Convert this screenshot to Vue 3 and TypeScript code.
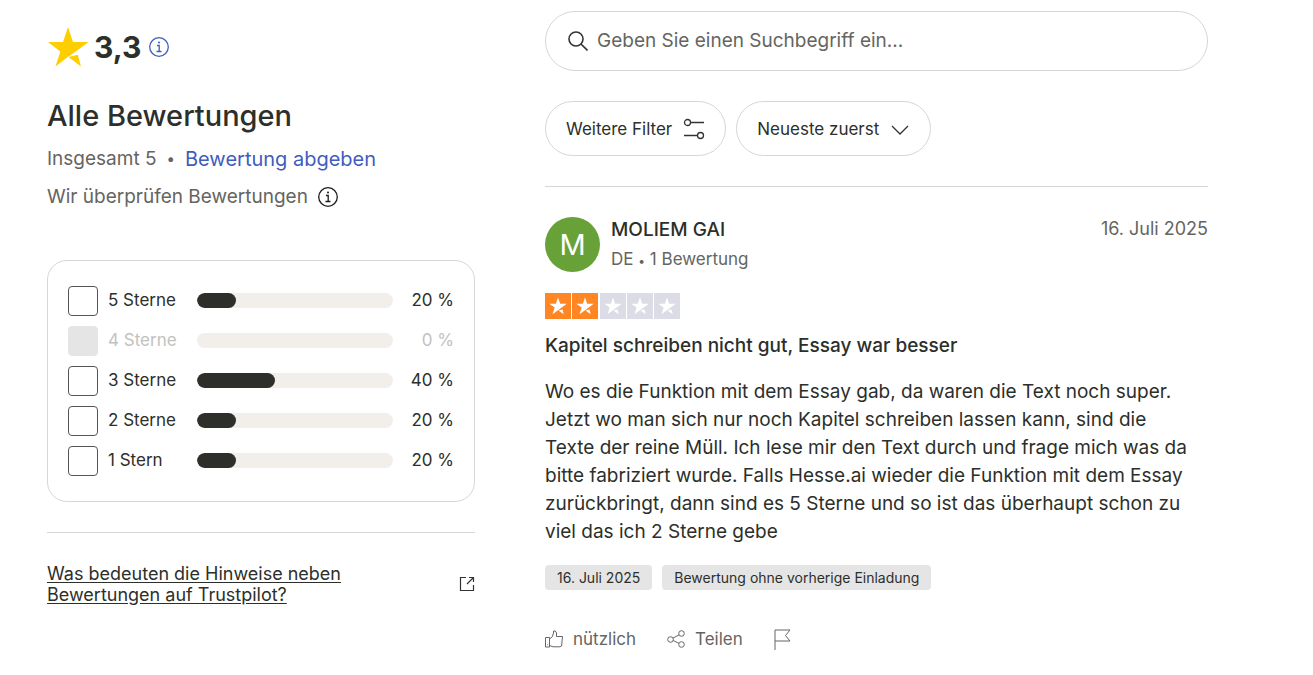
<script setup lang="ts">
import { ref } from 'vue'

interface RatingRow {
  stars: number
  label: string
  percent: number
}

const rows: RatingRow[] = [
  { stars: 5, label: '5 Sterne', percent: 20 },
  { stars: 4, label: '4 Sterne', percent: 0 },
  { stars: 3, label: '3 Sterne', percent: 40 },
  { stars: 2, label: '2 Sterne', percent: 20 },
  { stars: 1, label: '1 Stern', percent: 20 },
]

const selected = ref<number[]>([])
const query = ref('')
const sort = ref('recency')
const rating = 2
</script>

<template>
  <main class="page">
    <aside class="summary">
      <div class="score">
        <svg class="score-star" viewBox="0 0 42 40" aria-hidden="true">
          <path fill="#ffce00" d="M21 0l5 15h15.500L29.500 24 21 29.800 8.500 39.500l4.800-15L1 15h15z" />
          <path fill="#ffce00" d="M21.500 30l9.300-2.300L34 39.500z" />
        </svg>
        <strong class="score-value">3,3</strong>
        <button class="info info-blue" type="button" aria-label="Info zum TrustScore">
          <svg viewBox="0 0 20 20" aria-hidden="true">
            <circle cx="10" cy="10" r="9.300" />
            <path d="M8 8.500h2.200v6M7.500 14.500h5" />
            <circle class="dot" cx="10" cy="5.500" r="1" />
          </svg>
        </button>
      </div>

      <h2 class="heading">Alle Bewertungen</h2>
      <p class="line total">
        <span>Insgesamt 5</span><span class="bullet">•</span><a class="write" href="#">Bewertung abgeben</a>
      </p>
      <p class="line">
        <span>Wir überprüfen Bewertungen</span>
        <button class="info" type="button" aria-label="Mehr über die Überprüfung">
          <svg viewBox="0 0 20 20" aria-hidden="true">
            <circle cx="10" cy="10" r="9.300" />
            <path d="M8 8.500h2.200v6M7.500 14.500h5" />
            <circle class="dot" cx="10" cy="5.500" r="1" />
          </svg>
        </button>
      </p>

      <div class="distribution">
        <label v-for="row in rows" :key="row.stars" class="row" :class="{ disabled: row.percent === 0 }">
          <input v-model="selected" class="check" type="checkbox" :value="row.stars" :disabled="row.percent === 0" />
          <span class="row-label">{{ row.label }}</span>
          <span class="track"><span class="fill" :style="{ width: row.percent + '%' }"></span></span>
          <span class="percent">{{ row.percent }}&nbsp;%</span>
        </label>
      </div>

      <div class="help">
        <a class="help-link" href="#">Was bedeuten die Hinweise neben Bewertungen auf Trustpilot?</a>
        <svg class="external" viewBox="0 0 16 16" aria-hidden="true">
          <path d="M7 1.500H1.500v13h13V9M10 1.500h4.500V6M14.500 1.500L8 8" />
        </svg>
      </div>
    </aside>

    <section class="reviews">
      <label class="search">
        <svg class="search-icon" viewBox="0 0 20 20" aria-hidden="true">
          <circle cx="8" cy="8" r="7" />
          <path d="M13 13l6.500 6.500" />
        </svg>
        <input v-model="query" type="search" placeholder="Geben Sie einen Suchbegriff ein..." aria-label="Bewertungen durchsuchen" />
      </label>

      <div class="filters">
        <button class="pill" type="button">
          <span>Weitere Filter</span>
          <svg class="sliders" viewBox="0 0 22 22" aria-hidden="true">
            <circle cx="4.500" cy="4.500" r="3" />
            <path d="M7.500 4.500H21M1 17.500h13" />
            <circle cx="17.500" cy="17.500" r="3" />
          </svg>
        </button>
        <span class="pill-select">
          <select v-model="sort" class="pill" aria-label="Sortierung">
            <option value="recency">Neueste zuerst</option>
          </select>
          <svg class="chevron" viewBox="0 0 18 10" aria-hidden="true"><path d="M1 1l8 8 8-8" /></svg>
        </span>
      </div>

      <article class="review">
        <header class="consumer">
          <span class="avatar" aria-hidden="true">M</span>
          <div class="who">
            <a class="name" href="#">MOLIEM GAI</a>
            <span class="meta">DE <span class="sep">•</span> 1 Bewertung</span>
          </div>
          <time class="date" datetime="2025-07-16">16. Juli 2025</time>
        </header>

        <div class="stars" role="img" aria-label="Bewertet mit 2 von 5 Sternen">
          <span v-for="n in 5" :key="n" class="star" :class="{ on: n <= rating }">
            <svg viewBox="0 0 26 26" aria-hidden="true">
              <path d="M13 4.500l2.200 6.300h6.500l-5 3.700-3.700 2.700-5.500 4.100 2.200-6.800-5.400-3.700h6.500zM13.500 17.500l4-1 1.200 4.800z" />
            </svg>
          </span>
        </div>

        <h3 class="title">Kapitel schreiben nicht gut, Essay war besser</h3>
        <p class="text">
          Wo es die Funktion mit dem Essay gab, da waren die Text noch super.<br />
          Jetzt wo man sich nur noch Kapitel schreiben lassen kann, sind die<br />
          Texte der reine Müll. Ich lese mir den Text durch und frage mich was da<br />
          bitte fabriziert wurde. Falls Hesse.ai wieder die Funktion mit dem Essay<br />
          zurückbringt, dann sind es 5 Sterne und so ist das überhaupt schon zu<br />
          viel das ich 2 Sterne gebe
        </p>

        <div class="badges">
          <span class="badge">16. Juli 2025</span>
          <span class="badge">Bewertung ohne vorherige Einladung</span>
        </div>

        <div class="actions">
          <button class="action" type="button">
            <svg viewBox="0 0 18 18" aria-hidden="true">
              <path d="M.5 7.500h4v9.500h-4zM4.500 9l2.800-2.300L8.500 3V1h1.800l1.200 2v3.500h6l-.9 9.500-1.600.8H8L4.500 15.500M2.300 14.700h.8" />
            </svg>
            <span>nützlich</span>
          </button>
          <button class="action" type="button">
            <svg viewBox="0 0 18 18" aria-hidden="true">
              <circle cx="3.500" cy="9.500" r="2.800" />
              <circle cx="14.500" cy="3.500" r="2.800" />
              <circle cx="14.500" cy="14.500" r="2.800" />
              <path d="M6 8.100l6-3.200M6.200 10.500l5.700 2.800" />
            </svg>
            <span>Teilen</span>
          </button>
          <button class="action flag" type="button" aria-label="Bewertung melden">
            <svg viewBox="0 0 17 21" aria-hidden="true">
              <path d="M1 21V1h15l-4.500 5.500L16 12H1" />
            </svg>
          </button>
        </div>
      </article>
    </section>
  </main>
</template>

<style>
body {
  margin: 0;
  background: #fff;
}
</style>

<style scoped>
.page {
  box-sizing: border-box;
  display: grid;
  grid-template-columns: 428fr 663fr;
  column-gap: 70px;
  padding: 11px 105px 24px 47px;
  color: #2c2f2a;
  font-family: Inter, "Liberation Sans", sans-serif;
  font-size: 17px;
  line-height: 24px;
}

.page * {
  box-sizing: border-box;
}

button,
input,
select {
  margin: 0;
  color: inherit;
  font: inherit;
}

button {
  padding: 0;
  border: 0;
  background: none;
  cursor: pointer;
}

svg {
  display: block;
  flex: none;
  fill: none;
}

.summary {
  padding-top: 16px;
}

.score {
  display: flex;
  align-items: center;
  height: 40px;
}

.score-star {
  width: 42px;
  height: 40px;
  margin-right: 5px;
}

.score-value {
  font-size: 30px;
  font-weight: 700;
}

.score .info {
  margin-left: 8px;
}

.info {
  width: 20px;
  height: 20px;
  color: #1c1c1c;
}

.info-blue {
  color: #405cbf;
}

.info svg {
  width: 20px;
  height: 20px;
  stroke: currentColor;
  stroke-width: 1.3;
}

.info .dot {
  fill: currentColor;
  stroke: none;
}

.heading {
  margin: 29px 0 9px;
  font-size: 29px;
  font-weight: 500;
  line-height: 40px;
}

.line {
  display: flex;
  align-items: center;
  gap: 10px;
  margin: 0 0 10px;
  color: #65655f;
  font-size: 19px;
  line-height: 28px;
}

.bullet {
  font-size: 15px;
}

.write {
  color: #405cbf;
  font-size: 20px;
  text-decoration: none;
}

.distribution {
  display: grid;
  gap: 10px;
  margin-top: 49px;
  padding: 25px 20px;
  border: 1px solid #d6d6d4;
  border-radius: 20px;
}

.row {
  display: grid;
  grid-template-columns: 30px 79px minmax(0, 1fr) 61px;
  align-items: start;
  height: 30px;
  line-height: 28px;
}

.check {
  width: 30px;
  height: 30px;
  appearance: none;
  border: 1px solid #555;
  border-radius: 4px;
  background: #fff;
}

.check:checked {
  background: #2c2f2a;
}

.check:disabled {
  border-color: #e5e5e5;
  background: #e5e5e5;
}

.row-label {
  padding-left: 10px;
}

.disabled {
  color: #c2c2c0;
}

.track {
  height: 15px;
  margin: 7px 0 0 20px;
  overflow: hidden;
  border-radius: 8px;
  background: #f2efeb;
}

.fill {
  display: block;
  height: 100%;
  border-radius: 8px;
  background: #2c2f2a;
}

.percent {
  text-align: right;
}

.help {
  display: flex;
  align-items: center;
  justify-content: space-between;
  margin-top: 30px;
  padding-top: 30px;
  border-top: 1px solid #d6d6d4;
}

.help-link {
  max-width: 320px;
  color: inherit;
  font-size: 18px;
  line-height: 21px;
  text-underline-offset: 2px;
}

.external {
  width: 16px;
  height: 16px;
  stroke: #333;
  stroke-width: 1.2;
}

.search {
  display: flex;
  align-items: center;
  height: 60px;
  padding: 0 22px;
  border: 1px solid #d6d6d4;
  border-radius: 30px;
}

.search-icon {
  width: 20px;
  height: 20px;
  margin-right: 9px;
  stroke: #333;
  stroke-width: 1.6;
}

.search input {
  flex: 1;
  min-width: 0;
  padding: 0;
  border: 0;
  outline: 0;
  background: none;
  font-size: 19px;
}

.search input::placeholder {
  color: #65655f;
  opacity: 1;
}

.filters {
  display: flex;
  gap: 10px;
  padding: 30px 0;
  border-bottom: 1px solid #d6d6d4;
}

.pill {
  display: flex;
  align-items: center;
  gap: 11px;
  height: 55px;
  padding: 0 20px;
  border: 1px solid #d6d6d4;
  border-radius: 28px;
  background: #fff;
}

.sliders {
  width: 22px;
  height: 22px;
  stroke: #333;
  stroke-width: 1.3;
}

.pill-select {
  position: relative;
}

.pill-select .pill {
  padding-right: 50px;
  appearance: none;
}

.chevron {
  position: absolute;
  top: 24px;
  right: 22px;
  width: 18px;
  height: 10px;
  stroke: #333;
  stroke-width: 1.3;
  pointer-events: none;
}

.review {
  padding-top: 30px;
}

.consumer {
  display: flex;
  gap: 11px;
}

.avatar {
  display: grid;
  place-items: center;
  width: 55px;
  height: 55px;
  border-radius: 50%;
  background: #68a138;
  color: #fff;
  font-size: 29px;
}

.who {
  display: grid;
  align-content: start;
  gap: 4px;
}

.name {
  color: inherit;
  font-size: 19px;
  font-weight: 500;
  line-height: 26px;
  text-decoration: none;
}

.meta,
.date {
  color: #65655f;
}

.sep {
  font-size: 12px;
}

.date {
  margin-left: auto;
  font-size: 18px;
}

.stars {
  display: flex;
  justify-content: space-between;
  width: 135px;
  margin-top: 20px;
}

.star {
  width: 26px;
  height: 26px;
  background: #dcdce6;
}

.star.on {
  background: #ff8622;
}

.star path {
  fill: #fff;
}

.title {
  margin: 13px 0 18px;
  font-size: 19px;
  font-weight: 500;
  line-height: 28px;
}

.text {
  margin: 0;
  font-size: 19px;
  line-height: 28px;
}

.badges {
  display: flex;
  gap: 10px;
  margin-top: 19px;
}

.badge {
  padding: 0 12px;
  border-radius: 4px;
  background: #e5e5e5;
  font-size: 14px;
  line-height: 25px;
}

.actions {
  display: flex;
  gap: 31px;
  margin-top: 37px;
}

.action {
  display: flex;
  align-items: center;
  gap: 10px;
  color: #65655f;
}

.action svg {
  width: 18px;
  height: 18px;
  stroke: #65656a;
}

.flag svg {
  width: 17px;
  height: 21px;
}
</style>
